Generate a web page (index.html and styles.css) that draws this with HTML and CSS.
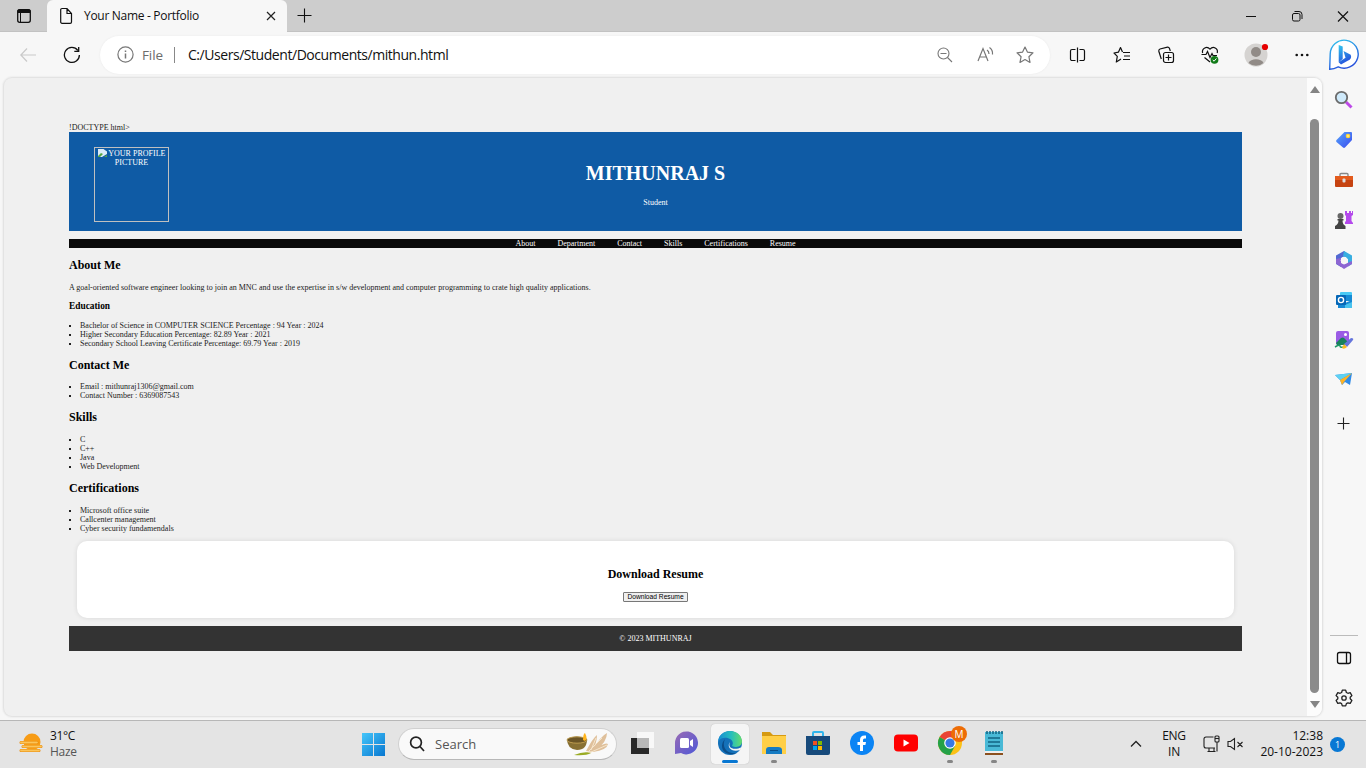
FILE: index.html
```html
<!DOCTYPE html>
<html lang="en">
<head>
<meta charset="utf-8">
<title>Your Name - Portfolio</title>
<link rel="stylesheet" href="styles.css">
</head>
<body>
<div class="screen">
  <div class="tabs">
    <div class="tab-actions"><svg width="16" height="16" viewBox="0 0 16 16"><rect x="1.7" y="1.7" width="12.6" height="12.6" rx="2" fill="none" stroke="#111" stroke-width="1.3"/><path d="M2 2h12v2.500H2zM4.500 5v9" stroke="#111" fill="#111"/></svg></div>
    <div class="tab">
      <svg width="14" height="18" viewBox="0 0 14 18" fill="none" stroke="#111" stroke-width="1.2"><path d="M3 1.5h5l4.5 5V15a1.3 1.3 0 0 1-1.3 1.3H3A1.3 1.3 0 0 1 1.700 15V2.800A1.300 1.300 0 0 1 3 1.500ZM8 1.500V6.500h4.500"/></svg>
      <span class="tab-title">Your Name - Portfolio</span>
      <svg class="tab-close" width="10" height="10" viewBox="0 0 10 10" stroke="#222" stroke-width="1.2"><path d="M1 1l8 8M9 1L1 9"/></svg>
    </div>
    <svg class="new-tab" width="15" height="15" viewBox="0 0 15 15" stroke="#111" stroke-width="1.1"><path d="M7.500 .5v14M.5 7.500h14"/></svg>
    <div class="win-buttons">
      <svg width="46" height="32" viewBox="0 0 46 32" stroke="#111"><path d="M18 16.500h10"/></svg>
      <svg width="46" height="32" viewBox="0 0 46 32" stroke="#111" fill="none"><rect x="18.500" y="13.500" width="7.500" height="7.500" rx="1.500"/><path d="M20.500 11.500h4.500a3 3 0 0 1 3 3v4.500"/></svg>
      <svg width="46" height="32" viewBox="0 0 46 32" stroke="#111" stroke-width="1.200"><path d="M18 11.500l10 10M28 11.500l-10 10"/></svg>
    </div>
  </div>

  <div class="toolbar">
    <svg class="back" width="16" height="14" viewBox="0 0 16 14" fill="none" stroke="#c9c9c9" stroke-width="1.2"><path d="M7 .5L.8 7 7 13.500M1 7h15"/></svg>
    <svg class="reload" width="18" height="18" viewBox="0 0 18 18" fill="none" stroke="#111" stroke-width="1.300"><path d="M16.400 9A7.500 7.500 0 1 1 14.800 4.300M15.700 1v4.300h-4.400"/></svg>
    <div class="address">
      <svg width="17" height="17" viewBox="0 0 17 17" fill="none" stroke="#777" stroke-width="1.200"><circle cx="8.500" cy="8.500" r="7.600"/><path d="M8.500 7.500v5M8.500 4.500v1.500" stroke-width="1.500"/></svg>
      <span class="scheme">File</span><span class="rule"></span><span class="url">C:/Users/Student/Documents/mithun.html</span>
      <div class="address-icons">
        <svg width="40" height="20" viewBox="0 0 40 20" fill="none" stroke="#777" stroke-width="1.100"><circle cx="18.500" cy="8.500" r="5.500"/><path d="M22.500 12.500l4.500 4.500M15.500 8.500h6"/></svg>
        <svg width="40" height="20" viewBox="0 0 40 20" fill="none" stroke="#777" stroke-width="1.200"><path d="M13 16l5-12.500L23 16M14.800 12h6.500M22 5q2 1.200 2 4M24.500 2.500q3.500 2.500 3 7"/></svg>
        <svg width="40" height="20" viewBox="0 0 40 20" fill="none" stroke="#777" stroke-width="1.200" stroke-linejoin="round"><path d="M20 2l2.400 5.100 5.600.7-4.100 3.900 1.100 5.700-5-2.800-5 2.800 1.100-5.700L12 7.800l5.600-.7z"/></svg>
      </div>
    </div>
    <div class="tools">
      <svg width="20" height="20" viewBox="0 0 20 20" fill="none" stroke="#111" stroke-width="1.200"><path d="M7.500 4.500H4A1.500 1.500 0 0 0 2.500 6v8A1.500 1.500 0 0 0 4 15.500h3.500M11.500 4.500H15A1.500 1.500 0 0 1 16.500 6v8a1.500 1.500 0 0 1-1.500 1.500h-3.500M9.500 2.500v15"/></svg>
      <svg width="20" height="20" viewBox="0 0 20 20" fill="none" stroke="#111" stroke-width="1.200" stroke-linejoin="round"><path d="M10.500 7L8.500 2.500 6.400 7.200 2 8l3.300 3.300-1 5.700L9 14M11 7.500h7M12 11h6M11 14.500h7"/></svg>
      <svg width="20" height="20" viewBox="0 0 20 20" fill="none" stroke="#111" stroke-width="1.200"><rect x="7.500" y="7.500" width="10" height="10" rx="2"/><path d="M12.500 9.500v6M9.500 12.500h6M5.300 14L2.800 6.300A2 2 0 0 1 4 4l7.500-1.800a2 2 0 0 1 2 1.300l.8 2.500"/></svg>
      <svg width="20" height="20" viewBox="0 0 20 20" fill="none" stroke="#111" stroke-width="1.200"><path d="M2.600 8C1.500 3 7 .8 10 4.200 13 .8 18.500 3 17.200 8M4.500 12.500L10 17M1.500 9.500H6l1.500-3 2.500 6 2-4 1 2h4"/><circle cx="14.500" cy="14.800" r="3.900" fill="#117b18" stroke="none"/><path d="M12.800 15l1.300 1.200 2.300-2.700" stroke="#fff" stroke-width="1"/></svg>
      <svg width="28" height="28" viewBox="0 0 28 28"><circle cx="14" cy="14" r="11.500" fill="#d5d3d1"/><circle cx="14" cy="11" r="5" fill="#918b87"/><path d="M6.500 22c2-5 13-5 15 0a11.500 11.500 0 0 1-15 0z" fill="#918b87"/><circle cx="23" cy="6" r="3.100" fill="#e60000"/></svg>
      <svg width="20" height="20" viewBox="0 0 20 20" fill="#111"><circle cx="4.700" cy="10" r="1.300"/><circle cx="10" cy="10" r="1.300"/><circle cx="15.300" cy="10" r="1.300"/></svg>
      <svg width="32" height="32" viewBox="0 0 32 32"><defs><linearGradient id="bg" x2=".4" y2="1"><stop stop-color="#31c8ee"/><stop offset="1" stop-color="#2651dc"/></linearGradient></defs><path d="M1.700 30.200L2.200 15a14 14 0 1 1 8 12.800Q6 30 1.700 30.200z" fill="#fff" stroke="url(#bg)" stroke-width="1.400"/><path d="M10.700 6l4 1.500V20l-4 3.300zM15.500 12l7.200 3.700q1.700 4-3 6L13 25.500l-2.300-2.200 6.800-4.500z" fill="url(#bg)"/></svg>
    </div>
  </div>

  <div class="workspace">
    <div class="viewport">
      <div class="page">
        <div>!DOCTYPE html&gt;</div>
        <header class="hero">
          <div class="photo"><svg width="9" height="8" viewBox="0 0 9 8"><path d="M0 0h5.500L9 2.500V5L4 8H0z" fill="#dcebf9"/><path d="M0 7l3-3 2 1-3 3H0zM6 8l3-2v2z" fill="#58a844"/></svg> YOUR PROFILE PICTURE</div>
          <h1>MITHUNRAJ S</h1>
          <p>Student</p>
        </header>
        <nav class="menu"><a>About</a><a>Department</a><a>Contact</a><a>Skills</a><a>Certifications</a><a>Resume</a></nav>
        <h2>About Me</h2>
        <p class="intro">A goal-oriented software engineer looking to join an MNC and use the expertise in s/w development and computer programming to crate high quality applications.</p>
        <h3>Education</h3>
        <ul><li>Bachelor of Science in COMPUTER SCIENCE Percentage : 94 Year : 2024</li><li>Higher Secondary Education Percentage: 82.89 Year : 2021</li><li>Secondary School Leaving Certificate Percentage: 69.79 Year : 2019</li></ul>
        <h2>Contact Me</h2>
        <ul><li>Email : mithunraj1306@gmail.com</li><li>Contact Number : 6369087543</li></ul>
        <h2>Skills</h2>
        <ul class="lower"><li>C</li><li>C++</li><li>Java</li><li>Web Development</li></ul>
        <h2>Certifications</h2>
        <ul class="lower"><li>Microsoft office suite</li><li>Callcenter management</li><li>Cyber security fundamendals</li></ul>
        <section class="download"><h2>Download Resume</h2><button>Download Resume</button></section>
        <footer class="copyright">© 2023 MITHUNRAJ</footer>
      </div>
      <div class="scrollbar"><span class="up"></span><span class="thumb"></span><span class="down"></span></div>
    </div>
    <aside class="sidebar">
      <svg viewBox="0 0 20 20"><path d="M12 12l5.500 5.500" stroke="#bd49e8" stroke-width="3"/><circle cx="7.500" cy="7.500" r="5.700" fill="#cfeafb" stroke="#6b6b6b" stroke-width="1.800"/></svg>
      <svg viewBox="0 0 20 20"><defs><linearGradient id="tag" y2="1"><stop stop-color="#55a5fb"/><stop offset="1" stop-color="#3b4bee"/></linearGradient></defs><path d="M10.500 2H17a1 1 0 0 1 1 1v7l-7 7.500a1.500 1.500 0 0 1-2 0L2.500 12a1.500 1.500 0 0 1 0-2z" fill="url(#tag)"/><circle cx="14" cy="6" r="2.300" fill="#ffd733"/><circle cx="14" cy="6" r=".7" fill="#fff"/></svg>
      <svg viewBox="0 0 20 20"><path d="M6 7V4.500q0-1 1-1h6q1 0 1 1V7" fill="none" stroke="#888" stroke-width="1.400"/><rect x="1" y="6" width="18" height="11" rx="1" fill="#c64311"/><path d="M1 6h18v4H1z" fill="#e35b1d"/><rect x="8.500" y="8.500" width="3" height="4" rx="1" fill="#ddd"/></svg>
      <svg viewBox="0 0 20 20"><path d="M11 1h2v2h2V1h2v2h1V1h1v4l-1.500 1v5l1.500 2v1h-8v-2l1-1V6l-1-1z" fill="#b449ec"/><circle cx="6.500" cy="6" r="3" fill="#666"/><path d="M3.500 9h6v1.500H8.500q0 4 3 5.500v3H1v-3q3.500-2 3.500-5.500h-1z" fill="#444"/></svg>
      <svg viewBox="0 0 20 20"><path d="M10 1L2 5.500V14l5 3V8l4-2 4 3V5z" fill="#5269d2"/><path d="M10 1l8 4.500V14l-4 2.500V9L9 6z" fill="#38aee1"/><path d="M2 13.500l8 5.500 8-5v-3l-8 3.500L7 13V8L2 9z" fill="#8d66d2"/><path d="M8.500 7h3.500l2 3.500-2 3H8.500l-2-3z" fill="#f7f7f7"/></svg>
      <svg viewBox="0 0 20 20"><rect x="6" y="2" width="12" height="9" rx="1" fill="#48c9f4"/><path d="M11 5h7v6h-7z" fill="#168bd5"/><path d="M4 10l7 3 7-3v8H4z" fill="#1688d4"/><path d="M11 15l7-3v6h-7z" fill="#48c2ee"/><rect x="2" y="5" width="10" height="10" rx="1" fill="#0567b7"/><circle cx="7" cy="10" r="2.600" fill="none" stroke="#fff" stroke-width="1.400"/></svg>
      <svg viewBox="0 0 20 20"><rect x="2" y="1" width="13" height="14" rx="2" fill="#9b5ce5"/><path d="M2 13l5-5q2-1 3 0l5 5v2H3z" fill="#18825c"/><circle cx="11.500" cy="4.500" r="1.500" fill="#fff"/><path d="M1 17q5-3 5-1t4 1" fill="none" stroke="#219b67" stroke-width="1.500"/><path d="M10 14l7-6q3 0 2 2l-6 7z" fill="#6575dc"/><path d="M10 14l3 3q-3 3-5 1z" fill="#f8ba20"/></svg>
      <svg viewBox="0 0 20 20"><path d="M1 5l17-2-2 12-5-3-3 3-2-5z" fill="#2f8be8"/><path d="M1 5l17-2L6 10z" fill="#5ed1f2"/><path d="M6 10l12-7-8 9-2 3z" fill="#ffb323"/></svg>
      <svg class="add" viewBox="0 0 20 20" stroke="#222" stroke-width="1.100"><path d="M9.500 3.500v12M3.500 9.500h12"/></svg>
      <div class="sidebar-bottom">
        <svg viewBox="0 0 20 20" fill="none" stroke="#111" stroke-width="1.300"><rect x="3.500" y="4.500" width="13" height="11" rx="2"/><path d="M12.500 4.500v11"/></svg>
        <svg viewBox="0 0 20 20" fill="none" stroke="#222" stroke-width="1.300" stroke-linejoin="round"><circle cx="10" cy="10" r="2.200"/><path d="M8.300 2.200h3.400l.7 2.300 1.500.8 2.300-.6 1.700 2.900-1.700 1.700v1.500l1.700 1.700-1.700 2.900-2.300-.6-1.500.8-.7 2.300H8.300l-.7-2.300-1.500-.8-2.300.6-1.700-2.900 1.700-1.700V9.300L2.100 7.600l1.700-2.900 2.300.6 1.500-.8z"/></svg>
      </div>
    </aside>
  </div>

  <div class="taskbar">
    <div class="weather"><svg width="24" height="24" viewBox="0 0 24 24"><circle cx="13" cy="10" r="8.500" fill="#f79c16"/><path d="M2 10.500h16M4 14.500h18M2 18.500h18" stroke="#e98605" stroke-width="3" stroke-linecap="round"/><path d="M2 10.500h16M4 14.500h18M2 18.500h18" stroke="#fbc55b" stroke-width="1.800" stroke-linecap="round"/></svg><div>31°C<br><span>Haze</span></div></div>
    <div class="start"><svg width="23" height="23" viewBox="0 0 23 23"><defs><linearGradient id="win" x2="1" y2="1"><stop stop-color="#45c6fa"/><stop offset="1" stop-color="#0877d0"/></linearGradient></defs><path d="M0 0h11v11H0zM12 0h11v11H12zM0 12h11v11H0zM12 12h11v11H12z" fill="url(#win)"/></svg></div>
    <div class="search"><svg width="16" height="16" viewBox="0 0 16 16" fill="none" stroke="#222" stroke-width="1.700"><circle cx="7" cy="6.500" r="5.400"/><path d="M11 10.500l4 4.500"/></svg><span>Search</span>
      <svg class="harvest" width="44" height="26" viewBox="0 0 44 26"><path d="M20 20Q27 7 31 4q0 9-5 15Q35 5 41 2q0 9-11 17 8-8 12-6-1 6-15 8z" fill="#dfc09b"/><path d="M21 22L36 7M23 22L41 14M25 19l5-12" stroke="#f6e5cb"/><path d="M8 24q10-4 17-2-5 3-17 2" fill="#9aab23"/><path d="M1 8q9-5 20 0 0 11-10 11Q1 18 1 8z" fill="#887033"/><ellipse cx="11" cy="9" rx="10" ry="3.200" fill="#6b5526" stroke="#bd9c50"/><path d="M17 9q0-6 2-7 3 6 0 8z" fill="#ffb31b"/></svg></div>
    <div class="apps">
      <div><svg viewBox="0 0 26 26"><path d="M2 8h18v16H2z" fill="#292929"/><path d="M8 2h17v16H8z" fill="#fff" opacity=".75"/><path d="M8 8h12v10H8z" fill="#b8b8b8"/></svg></div>
      <div><svg viewBox="0 0 26 26"><defs><linearGradient id="chat" y2="1"><stop stop-color="#9a6bb4"/><stop offset="1" stop-color="#4e57d7"/></linearGradient></defs><path d="M2 24V13a11.500 11.500 0 1 1 6 10z" fill="url(#chat)"/><rect x="7" y="8" width="9" height="10" rx="1.500" fill="#fff"/><path d="M17 11l3-2v8l-3-2z" fill="#fff"/></svg></div>
      <div class="selected"><svg viewBox="0 0 26 26"><defs><linearGradient id="edge" x2="1"><stop stop-color="#168bd4"/><stop offset=".55" stop-color="#26bebc"/><stop offset="1" stop-color="#65dd6c"/></linearGradient></defs><circle cx="13" cy="13" r="12" fill="#1471b9"/><path d="M1 12C2-3 24-2 25 11c0 6-6 7-10 5 3-5-3-9-8-8-3 0-5 2-6 4z" fill="url(#edge)"/><path d="M8 9c-4 9 3 16 12 14C9 28 0 18 8 9z" fill="#0b4e8a"/><path d="M13 12c-3 6 4 9 12 5l-2 3c-8 3-14-3-10-8z" fill="#f5f5f5"/></svg></div>
      <div class="running"><svg viewBox="0 0 26 26"><path d="M1 2h8l3 3h13v5H1z" fill="#d69a12"/><path d="M1 6h24v18H1z" fill="#ffcf47"/><path d="M5 24v-4q0-3 3-3h9q4 0 4 3v4z" fill="#157bc2"/><path d="M9 20.500h8" stroke="#0a4e88"/></svg></div>
      <div><svg viewBox="0 0 26 26"><path d="M8 7V3q0-1 1-1h8q1 0 1 1v4" fill="none" stroke="#2fb5ec" stroke-width="2"/><path d="M1 6h24v17q0 2-2 2H3q-2 0-2-2z" fill="#174a7b"/><path d="M8 11h4v4H8z" fill="#f25022"/><path d="M13 11h4v4h-4z" fill="#7fba00"/><path d="M8 16h4v4H8z" fill="#00a4ef"/><path d="M13 16h4v4h-4z" fill="#ffb900"/></svg></div>
      <div><svg viewBox="0 0 26 26"><circle cx="13" cy="13" r="12" fill="#0b84f4"/><path d="M11 21v-6H8.500v-3H11v-2q0-4.500 4.500-4.500H17v3h-1.500q-1.500 0-1.500 1.500v2h3l-.6 3H14v6z" fill="#fff"/></svg></div>
      <div><svg viewBox="0 0 26 26"><rect x="1" y="4.500" width="24" height="17" rx="4" fill="#f00"/><path d="M10.500 9.500l6 3.500-6 3.500z" fill="#fff"/></svg></div>
      <div class="running chrome"><svg viewBox="0 0 26 26"><circle cx="13" cy="13" r="12" fill="#fbc116"/><path d="M13 13L2.600 7A12 12 0 0 1 23.400 7z" fill="#e94335"/><path d="M2.600 7A12 12 0 0 0 13 25l5-9-5-3z" fill="#24a148"/><circle cx="13" cy="13" r="5.800" fill="#fff"/><circle cx="13" cy="13" r="4.600" fill="#3779e4"/></svg><b>M</b></div>
      <div class="running"><svg viewBox="0 0 26 26"><path d="M4 2h18v21H4z" fill="#49b9d6"/><path d="M4 22h18v3H4z" fill="#8b501e"/><path d="M4 21h18v2H4z" fill="#eee"/><path d="M6 1v3M9 1v3M12 1v3M15 1v3M18 1v3M21 1v3M7 8h12M7 12h12M7 16h12" stroke="#126484" stroke-width="1.500"/></svg></div>
    </div>
    <div class="tray">
      <svg width="12" height="8" viewBox="0 0 12 8" fill="none" stroke="#222" stroke-width="1.300"><path d="M1 6.500l5-5 5 5"/></svg>
      <div class="language">ENG<br>IN</div>
      <svg class="network" width="18" height="18" viewBox="0 0 18 18" fill="none" stroke="#222" stroke-width="1.100"><path d="M10.500 2H3a2 2 0 0 0-2 2v7a2 2 0 0 0 2 2h9M14 7v9.500M4.500 16.500h8M6 13v3.500M11 13v3.500"/><rect x="12" y="1" width="4" height="6" rx="1"/><path d="M12 3.500h4"/></svg>
      <svg width="16" height="16" viewBox="0 0 16 16" fill="none" stroke="#222" stroke-width="1.100"><path d="M1 5.500h2.500L7.500 2.500v11l-4-3H1zM10.500 6l5 5M15.500 6l-5 5"/></svg>
      <div class="clock">12:38<br>20-10-2023</div><span class="notice">1</span>
    </div>
  </div>
</div>
</body>
</html>
```
FILE: styles.css
```css
* { box-sizing: border-box; }
body { margin: 0; font-family: "Open Sans", "Noto Sans", sans-serif; color: #111; }
svg { display: block; flex: none; }
.screen { width: 1366px; height: 768px; display: flex; flex-direction: column; overflow: hidden; background: #f7f7f7; }
.tabs { height: 32px; flex: none; display: flex; align-items: center; background: #cdcdcd; border-bottom: 1px solid #c2c2c2; }
.tab-actions { width: 47px; padding-left: 16px; }
.tab { width: 240px; height: 32px; background: #f7f7f7; border-radius: 6px 6px 0 0; display: flex; align-items: center; padding: 0 11px 0 12px; }
.tab-title { font-size: 12px; letter-spacing: -.3px; margin-left: 11px; white-space: nowrap; }
.tab-close { margin-left: auto; }
.new-tab { margin-left: 10px; }
.win-buttons { display: flex; margin-left: auto; }
.toolbar { height: 46px; padding-bottom: 1px; flex: none; display: flex; align-items: center; }
.back { margin-left: 20px; }
.reload { margin: 0 28px 0 27px; }
.address { width: 950px; height: 38px; margin-left: -9px; border-radius: 19px; background: #fff; box-shadow: 0 0 2px #e7e7e7; display: flex; align-items: center; padding: 0 5px 0 17px; font-size: 14px; white-space: nowrap; }
.scheme { width: 24px; margin-left: 8px; font-size: 13.5px; letter-spacing: -.1px; color: #6c6c6c; }
.rule { width: 1px; height: 16px; background: #888; margin: 0 13px 0 8px; }
.url { letter-spacing: -.45px; }
.address-icons { display: flex; margin-left: auto; }
.tools { display: grid; grid-template-columns: 45px 44px 44px 44px 48px 44px 40px; margin-left: 5px; align-items: center; justify-items: center; }
.workspace { height: 642px; flex: none; display: flex; padding-left: 4px; }
.viewport { width: 1318px; height: 638px; flex: none; display: flex; background: #f0f0f0; border-radius: 8px; overflow: hidden; box-shadow: 0 0 2px 1px #dcdcdc; }
.page { width: 1303px; flex: none; padding: 45px 65px 0; font: 8px/9px "Liberation Serif", serif; color: #222; }
.page h1, .page h2, .page h3, .page p, .page ul { margin: 0; }
.page h2 { font-size: 12px; line-height: 14px; margin: 10px 0; color: #000; }
.page .intro { margin-top: 11px; }
.page h3 { font-size: 9.36px; line-height: 11px; margin: 9px 0; color: #000; }
.page ul { list-style: none; padding: 0; }
.page ul.lower { margin-top: 11px; }
.page li { padding-left: 11px; position: relative; }
.page li::before { content: ""; position: absolute; left: 0; top: 4px; width: 2px; height: 2px; background: #222; }
.hero { height: 99px; background: #0f5ba5; color: #fff; text-align: center; padding-top: 30px; position: relative; }
.page .hero h1 { font-size: 20px; line-height: 23px; }
.page .hero p { margin-top: 13px; }
.photo { position: absolute; left: 25px; top: 15px; width: 75px; height: 75px; border: 1px solid #c0c0c0; padding: 1px 0; }
.photo svg { display: inline-block; vertical-align: -1px; height: 8px; }
.menu { height: 9px; margin-top: 8px; background: #0a0a0a; color: #fff; display: flex; justify-content: center; gap: 22px; }
.download { height: 77px; margin: 8px; padding-top: 26px; border-radius: 10px; background: #fff; box-shadow: 0 0 5px rgba(0,0,0,.1); display: flex; flex-direction: column; align-items: center; }
.page .download h2 { margin: 0 0 11px; }
.download button { width: 65px; height: 10px; padding: 0; border: 1px solid #777; border-radius: 1px; background: #efefef; font: 6.67px/8px "Liberation Sans", sans-serif; white-space: nowrap; }
.copyright { height: 25px; line-height: 25px; text-align: center; background: #333; color: #fff; }
.scrollbar { width: 15px; background: #fcfcfc; display: flex; flex-direction: column; align-items: center; padding-top: 8px; }
.up, .down { border: 5px solid transparent; }
.up { border-top: 0; border-bottom: 7px solid #858585; }
.down { border-bottom: 0; border-top: 7px solid #858585; margin-top: 8px; }
.thumb { width: 9px; height: 574px; margin-top: 26px; border-radius: 5px; background: #8b8b8b; }
.sidebar { width: 44px; padding-top: 12px; display: flex; flex-direction: column; align-items: center; }
.sidebar > svg { width: 20px; height: 20px; margin-bottom: 20px; }
.sidebar .add { margin-top: 4px; }
.sidebar-bottom { width: 28px; border-top: 1px solid #bbb; margin: auto 0 12px; padding: 12px 4px 0; }
.sidebar-bottom svg { width: 20px; height: 20px; }
.sidebar-bottom svg + svg { margin-top: 20px; }
.taskbar { height: 48px; padding-bottom: 1px; border-top: 1px solid #b7b7b7; background: #e4e4e4; display: flex; align-items: center; font-size: 12px; line-height: 16px; }
.weather { width: 351px; display: flex; align-items: center; gap: 7px; padding-left: 19px; letter-spacing: -.4px; }
.weather span { color: #555; letter-spacing: -.3px; }
.start { width: 44px; display: flex; justify-content: center; }
.search { width: 219px; height: 32px; margin-left: 3px; border: 1px solid #d0d0d0; border-bottom-color: #b8b8b8; border-radius: 16px; background: #f9f9f9; display: flex; align-items: center; padding: 0 6px 0 10px; }
.search span { margin-left: 10px; color: #555; font-size: 13px; }
.harvest { margin-left: auto; }
.apps { display: flex; margin-left: 3px; }
.apps > div { width: 38px; height: 40px; margin: 0 3px; padding: 6px; position: relative; border-radius: 4px; }
.apps svg { width: 26px; height: 26px; }
.apps .selected { background: #f5f5f5; box-shadow: 0 0 1px #aaa; }
.running::after, .selected::after { content: ""; position: absolute; left: 16px; bottom: 1px; width: 6px; height: 3px; border-radius: 2px; background: #868686; }
.selected::after { left: 11px; width: 16px; background: #0877d2; }
.chrome b { position: absolute; left: 20px; top: 2px; width: 16px; height: 16px; border-radius: 50%; background: #ed6c05; color: #fff; font: 10px/16px "Open Sans", sans-serif; text-align: center; }
.tray { margin-left: auto; padding-right: 21px; display: flex; align-items: center; }
.language { width: 30px; margin-left: 17px; text-align: center; letter-spacing: -.3px; }
.network { margin-left: 14px; margin-right: 6px; }
.clock { width: 72px; margin-left: 8px; text-align: right; letter-spacing: 0; white-space: nowrap; }
.notice { width: 15px; height: 15px; margin-left: 7px; border-radius: 50%; background: #0878d4; color: #fff; font-size: 9px; line-height: 15px; text-align: center; }
```
